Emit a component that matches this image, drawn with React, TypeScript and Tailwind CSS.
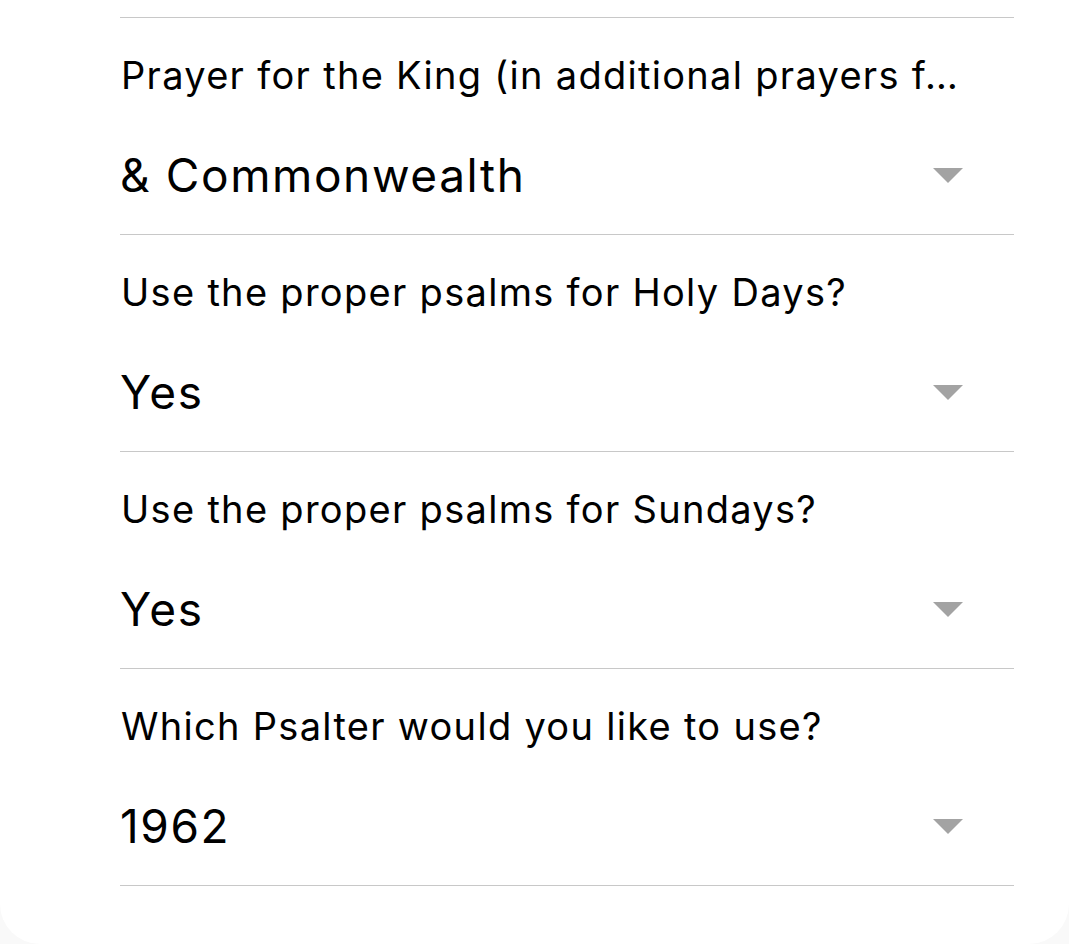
import React from 'react';

interface SettingRow {
  id: string;
  label: string;
  value: string;
}

const ROWS: SettingRow[] = [
  { id: 'king', label: 'Prayer for the King (in additional prayers f…', value: '& Commonwealth' },
  { id: 'holy', label: 'Use the proper psalms for Holy Days?', value: 'Yes' },
  { id: 'sundays', label: 'Use the proper psalms for Sundays?', value: 'Yes' },
  { id: 'psalter', label: 'Which Psalter would you like to use?', value: '1962' },
];

const Caret: React.FC = () => (
  <svg width="30" height="15" viewBox="0 0 30 15" className="shrink-0">
    <polygon points="0,0 30,0 15,15" fill="#a3a3a3" />
  </svg>
);

const App: React.FC = () => {
  return (
    <div
      className="w-[1069px] h-[944px] bg-[#f9f9f9] overflow-hidden"
      style={{ fontFamily: 'Inter, "Noto Sans", sans-serif' }}
    >
      <div className="h-full bg-white rounded-b-[40px] pt-[17px] pl-[120px] pr-[55px]">
        <div className="border-t border-[#c8c8c8]">
          {ROWS.map((row) => (
            <div key={row.id} className="border-b border-[#c8c8c8] h-[217px] pt-[34px] pr-[40px]">
              <div className="text-[38px] leading-[46px] tracking-[1.3px] text-black whitespace-nowrap pl-px">
                {row.label}
              </div>
              <div className="mt-[49px] pr-[11px] flex items-center justify-between">
                <span className="text-[46px] leading-[56px] tracking-[1.6px] text-black">{row.value}</span>
                <Caret />
              </div>
            </div>
          ))}
        </div>
      </div>
    </div>
  );
};

export default App;
